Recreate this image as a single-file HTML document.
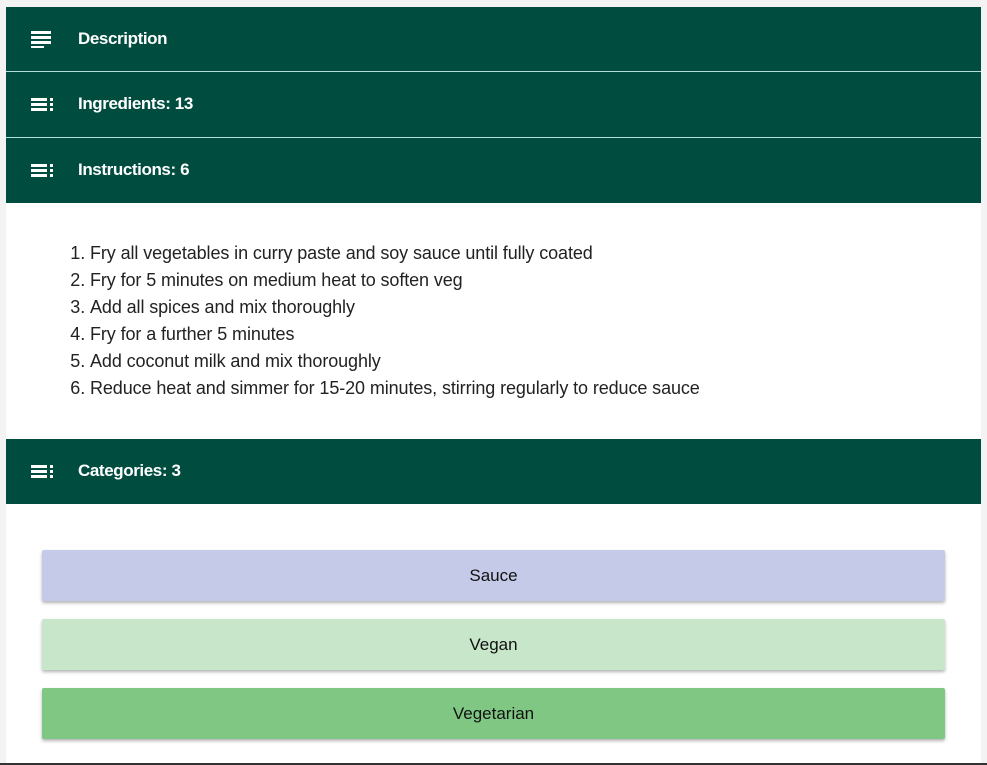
<!DOCTYPE html>
<html><head><style>
html,body{margin:0;padding:0;}
body{width:987px;height:765px;background:#f3f3f3;position:relative;overflow:hidden;font-family:"Liberation Sans",sans-serif;}
.wrap{position:absolute;left:6px;top:7px;width:975px;height:756px;background:#fff;}
.bar{position:absolute;left:0;width:975px;height:65px;background:#004d40;color:#fff;font-weight:bold;font-size:17px;letter-spacing:-0.4px;}
.bar span{position:absolute;left:72px;top:22px;}
.bar svg{position:absolute;left:25px;top:23px;}
.sep{position:absolute;left:0;width:975px;height:1px;background:#b2dfdb;}
ol{position:absolute;left:70px;top:240px;margin:0;padding:0 0 0 20px;font-size:18px;line-height:27px;color:#222;letter-spacing:-0.1px;}
.btn{position:absolute;left:42px;width:903px;height:51px;box-shadow:0 2px 3px rgba(0,0,0,.3);text-align:center;line-height:51px;font-size:17px;color:#111;border-radius:2px;}
.bot{position:absolute;left:0;top:763px;width:987px;height:2px;background:#333;}
</style></head><body>
<div class="wrap"></div>
<div class="bar" style="left:6px;top:7px"><svg width="22" height="18"><rect x="0" y="1" width="20" height="3" fill="#fff"/><rect x="0" y="6" width="20" height="3" fill="#fff"/><rect x="0" y="11" width="20" height="3" fill="#fff"/><rect x="0" y="16" width="13" height="2" fill="#fff"/></svg><span>Description</span></div>
<div class="sep" style="left:6px;top:71px"></div>
<div class="bar" style="left:6px;top:72px"><svg width="24" height="18"><rect x="0" y="3" width="16" height="3" fill="#fff"/><rect x="0" y="8" width="16" height="3" fill="#fff"/><rect x="0" y="13" width="16" height="3" fill="#fff"/><rect x="19" y="3" width="3" height="3" fill="#fff"/><rect x="19" y="8" width="3" height="3" fill="#fff"/><rect x="19" y="13" width="3" height="3" fill="#fff"/></svg><span>Ingredients: 13</span></div>
<div class="sep" style="left:6px;top:137px"></div>
<div class="bar" style="left:6px;top:138px"><svg width="24" height="18"><rect x="0" y="3" width="16" height="3" fill="#fff"/><rect x="0" y="8" width="16" height="3" fill="#fff"/><rect x="0" y="13" width="16" height="3" fill="#fff"/><rect x="19" y="3" width="3" height="3" fill="#fff"/><rect x="19" y="8" width="3" height="3" fill="#fff"/><rect x="19" y="13" width="3" height="3" fill="#fff"/></svg><span>Instructions: 6</span></div>
<ol>
<li>Fry all vegetables in curry paste and soy sauce until fully coated</li>
<li>Fry for 5 minutes on medium heat to soften veg</li>
<li>Add all spices and mix thoroughly</li>
<li>Fry for a further 5 minutes</li>
<li>Add coconut milk and mix thoroughly</li>
<li>Reduce heat and simmer for 15-20 minutes, stirring regularly to reduce sauce</li>
</ol>
<div class="bar" style="left:6px;top:439px"><svg width="24" height="18"><rect x="0" y="3" width="16" height="3" fill="#fff"/><rect x="0" y="8" width="16" height="3" fill="#fff"/><rect x="0" y="13" width="16" height="3" fill="#fff"/><rect x="19" y="3" width="3" height="3" fill="#fff"/><rect x="19" y="8" width="3" height="3" fill="#fff"/><rect x="19" y="13" width="3" height="3" fill="#fff"/></svg><span>Categories: 3</span></div>
<div class="btn" style="top:550px;background:#c5cae9">Sauce</div>
<div class="btn" style="top:619px;background:#c8e6c9">Vegan</div>
<div class="btn" style="top:688px;background:#81c784">Vegetarian</div>
<div class="bot"></div>
</body></html>
